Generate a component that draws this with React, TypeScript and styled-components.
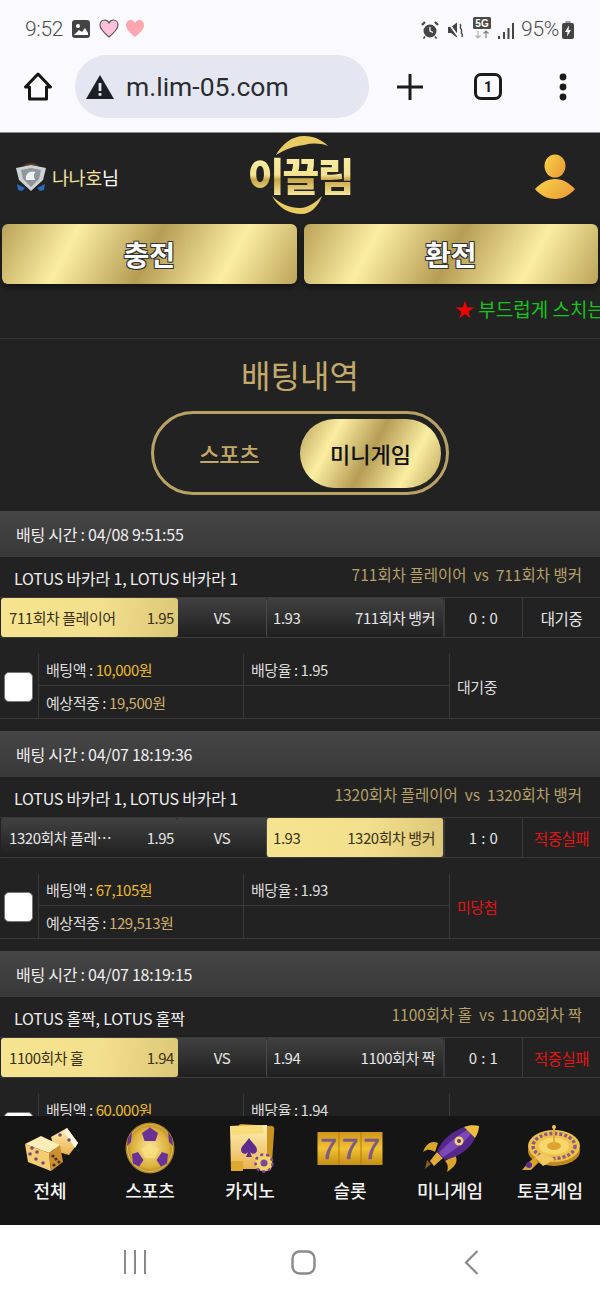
import React from 'react';
import styled, { createGlobalStyle } from 'styled-components';

const GOLD_BAND = 'linear-gradient(118deg, #b9a358 0%, #fbeea2 24%, #b59d54 50%, #fbeea2 76%, #bba45a 100%)';
const KR = '"Noto Sans CJK KR", "Noto Sans", sans-serif';

const GlobalStyle = createGlobalStyle`
  html, body {
    margin: 0;
    padding: 0;
    background: #222;
  }
  * {
    box-sizing: border-box;
  }
`;

const Phone = styled.div`
  display: flex;
  flex-direction: column;
  width: 600px;
  height: 1300px;
  overflow: hidden;
  font-family: ${KR};
`;

// device + browser
const Chrome = styled.div`
  flex: 0 0 133px;
  display: flex;
  flex-direction: column;
  background: #f9f9fe;
  border-bottom: 1px solid #8c8c8c;
`;

const StatusBar = styled.div`
  height: 55px;
  padding: 18px 26px 0 25px;
  display: flex;
  justify-content: space-between;
  align-items: flex-start;
  color: #4c4c4c;
  font-family: Roboto, sans-serif;
  font-weight: 300;
`;

const StatusGroup = styled.div`
  display: flex;
  align-items: center;
  height: 21px;
  gap: 7px;
`;

const StatusText = styled.span`
  font-size: 21px;
  letter-spacing: -0.3px;
`;

const BrowserBar = styled.div`
  height: 63px;
  padding: 0 24px;
  display: flex;
  align-items: center;
`;

const UrlPill = styled.div`
  width: 294px;
  height: 63px;
  margin-left: 23px;
  padding-left: 11px;
  display: flex;
  align-items: center;
  gap: 12px;
  border-radius: 32px;
  background: #e4e7f1;
`;

const UrlText = styled.span`
  font-family: Roboto, sans-serif;
  font-size: 26.5px;
  color: #2a2c30;
`;

const BrowserActions = styled.div`
  display: flex;
  align-items: center;
  margin-left: 28px;
`;

const TabCount = styled.div`
  width: 28px;
  height: 27px;
  margin: 0 57px 0 51px;
  display: flex;
  align-items: center;
  justify-content: center;
  border: 3px solid #1b1b1b;
  border-radius: 7px;
  font-family: Roboto, sans-serif;
  font-size: 15px;
  font-weight: 700;
  color: #1b1b1b;
`;

// scrolling page
const Page = styled.div`
  flex: 1;
  min-height: 0;
  overflow: hidden;
  background: #222222;
`;

const SiteHeader = styled.div`
  height: 91px;
  padding: 0 24px 0 15px;
  display: grid;
  grid-template-columns: 233px 104px 1fr;
  align-items: center;
`;

const User = styled.div`
  display: flex;
  align-items: center;
  gap: 5px;
  margin-top: -3px;
  font-size: 18.5px;
  letter-spacing: -0.4px;
  color: #fff;

  em {
    font-style: normal;
    color: #efe2a0;
  }
`;

const Logo = styled.div`
  position: relative;
  height: 80px;
  display: flex;
  align-items: center;
  justify-content: center;
`;

const LogoArcs = styled.svg`
  position: absolute;
  left: 0;
  top: 0;
  overflow: visible;
`;

const LogoText = styled.span`
  position: relative;
  margin-top: -8px;
  font-size: 40px;
  font-weight: 900;
  line-height: 1;
  letter-spacing: -2px;
  white-space: nowrap;
  color: transparent;
  background: linear-gradient(180deg, #f8eca4 0%, #f4e391 50%, #c9a544 62%, #f5e699 100%);
  -webkit-background-clip: text;
  background-clip: text;
`;

const Profile = styled.div`
  display: flex;
  justify-content: flex-end;
  margin-top: -3px;
`;

const CashRow = styled.div`
  display: flex;
  gap: 7px;
  padding: 0 2px;
`;

const CashButton = styled.div`
  flex: 1;
  height: 60px;
  display: flex;
  align-items: center;
  justify-content: center;
  border-radius: 6px;
  background: ${GOLD_BAND};
  box-shadow: 0 4px 6px rgba(0, 0, 0, 0.4);
  font-size: 28px;
  font-weight: 700;
  color: #fff;
  text-shadow: -1px -1px 0 #333, 1px -1px 0 #333, -1px 1px 0 #333, 1px 1px 0 #333;
`;

const Marquee = styled.div`
  height: 55px;
  padding: 8px 0 0 455px;
  overflow: hidden;
  white-space: nowrap;
  border-bottom: 1px solid #333;
  font-size: 19px;
  line-height: 34px;
  color: #16c41c;

  b {
    font-weight: 400;
    color: #f00000;
  }
`;

const Title = styled.h1`
  margin: 12px 0 14px;
  text-align: center;
  font-size: 32px;
  font-weight: 400;
  line-height: 46px;
  color: #c3aa6c;
`;

const Toggle = styled.div`
  width: 298px;
  height: 84px;
  margin: 0 auto 16px;
  padding: 4px 5px 4px 0;
  display: flex;
  align-items: center;
  border: 3px solid #b8a265;
  border-radius: 42px;
`;

const ToggleItem = styled.div`
  flex: 0 0 ${(props) => (props.$active ? 141 : 146)}px;
  height: 69px;
  padding-left: ${(props) => (props.$active ? 0 : 5)}px;
  display: flex;
  align-items: center;
  justify-content: center;
  border-radius: 35px;
  font-size: 22px;
  font-weight: 500;
  color: ${(props) => (props.$active ? '#111' : '#c2a868')};
  background: ${(props) => (props.$active ? GOLD_BAND : 'transparent')};
`;

// betting card
const Card = styled.div`
  margin-bottom: 12px;
`;

const CardTime = styled.div`
  height: 46px;
  padding-left: 16px;
  display: flex;
  align-items: center;
  background: linear-gradient(180deg, #454545, #393939);
  font-size: 16px;
  letter-spacing: -0.25px;
  color: #eee;
`;

const InfoRow = styled.div`
  height: 40px;
  padding: 0 18px 0 14px;
  display: flex;
  justify-content: space-between;
`;

const League = styled.span`
  padding-top: 9px;
  font-size: 16px;
  letter-spacing: -0.2px;
  color: #eee;
`;

const Versus = styled.span`
  padding-top: 6px;
  font-size: 15.5px;
  white-space: pre;
  color: #b5a06a;
`;

const MatchRow = styled.div`
  height: 41px;
  padding-left: 1px;
  display: grid;
  grid-template-columns: 177px 88px 178px 78px 78px;
  border-top: 1px solid #3a3a3a;
  border-bottom: 1px solid #3a3a3a;
`;

const Pick = styled.div`
  min-width: 0;
  padding: 0 ${(props) => (props.$reverse ? 8 : 4)}px 0 ${(props) => (props.$reverse ? 6 : 8)}px;
  display: flex;
  flex-direction: ${(props) => (props.$reverse ? 'row-reverse' : 'row')};
  align-items: center;
  justify-content: space-between;
  gap: 8px;
  border-radius: 3px;
  font-size: 15px;
  letter-spacing: -0.45px;
  color: ${(props) => (props.$active ? '#3a3116' : '#e6e6e6')};
  background: ${(props) =>
    props.$active
      ? 'linear-gradient(100deg, #f6e491 0%, #f3e08e 55%, #dcc677 100%)'
      : 'linear-gradient(180deg, #414141 0%, #1f1f1f 100%)'};
  border-left: ${(props) => (props.$reverse ? '1px solid #4a4a4a' : 'none')};
  border-right: ${(props) => (props.$reverse ? '1px solid #3a3a3a' : 'none')};
`;

const PickName = styled.span`
  min-width: 0;
  max-width: 110px;
  overflow: hidden;
  white-space: nowrap;
  text-overflow: ellipsis;
`;

const VsCell = styled(Pick)`
  padding: 0;
  justify-content: center;
  border-radius: 0;
`;

const ScoreCell = styled.div`
  display: flex;
  align-items: center;
  justify-content: center;
  border-left: 1px solid #3a3a3a;
  font-size: ${(props) => (props.$wide ? 15 : 15.5)}px;
  letter-spacing: ${(props) => (props.$wide ? 0.4 : -0.5)}px;
  color: ${(props) => (props.$failed ? '#e01414' : '#e6e6e6')};
`;

const Detail = styled.div`
  height: 65px;
  margin-top: 16px;
  display: grid;
  grid-template-columns: 38px 205px 206px 1fr;
  grid-template-rows: 1fr 1fr;
  border-bottom: 1px solid #3a3a3a;
`;

const CheckCell = styled.div`
  grid-row: 1 / span 2;
  padding: 18px 0 0 4px;
`;

const CheckBox = styled.input.attrs({ type: 'checkbox' })`
  appearance: none;
  display: block;
  width: 29px;
  height: 30px;
  margin: 0;
  border: 1px solid #777;
  border-radius: 5px;
  background: #fff;
`;

const DetailCell = styled.div`
  padding-left: 7px;
  display: flex;
  align-items: center;
  border-left: 1px solid #3a3a3a;
  border-bottom: ${(props) => (props.$top ? '1px solid #3a3a3a' : 'none')};
  font-size: 15px;
  letter-spacing: -0.45px;
  color: #ddd;
`;

const Amount = styled.span`
  margin-left: 3px;
  color: ${(props) => (props.$strong ? '#eab92e' : '#cfae6c')};
`;

const ResultCell = styled(DetailCell)`
  grid-column: 4;
  grid-row: 1 / span 2;
  border-bottom: none;
  color: ${(props) => (props.$failed ? '#e01414' : '#ddd')};
`;

// fixed menus
const BottomNav = styled.div`
  flex: 0 0 109px;
  padding-top: 5px;
  display: grid;
  grid-template-columns: repeat(6, 100px);
  background: #151515;
`;

const NavItem = styled.div`
  display: flex;
  flex-direction: column;
  align-items: center;
`;

const NavLabel = styled.span`
  margin-top: 2px;
  font-size: 18px;
  font-weight: 500;
  line-height: 26px;
  white-space: nowrap;
  color: #f4f4f4;
`;

const AndroidNav = styled.div`
  flex: 0 0 75px;
  padding-top: 25px;
  display: flex;
  align-items: flex-start;
  background: #fff;
`;

const AndroidSlot = styled.div`
  flex: 0 0 ${(props) => props.$width}px;
  display: flex;
  justify-content: flex-end;
`;

const GoldDefs = () => (
  <svg width="0" height="0" style={{ position: 'absolute' }}>
    <defs>
      <linearGradient id="gold" x1="0" y1="0" x2="1" y2="1">
        <stop offset="0" stopColor="#fbe88e" />
        <stop offset="0.5" stopColor="#e3b43a" />
        <stop offset="1" stopColor="#a8741a" />
      </linearGradient>
      <linearGradient id="goldLight" x1="0" y1="0" x2="0" y2="1">
        <stop offset="0" stopColor="#fff0b4" />
        <stop offset="1" stopColor="#e9b04c" />
      </linearGradient>
      <radialGradient id="ball" cx="0.5" cy="0.5" r="0.55">
        <stop offset="0" stopColor="#f9e59a" />
        <stop offset="0.7" stopColor="#dcae38" />
        <stop offset="1" stopColor="#8c6414" />
      </radialGradient>
      <linearGradient id="profile" x1="0" y1="0" x2="1" y2="0.6">
        <stop offset="0" stopColor="#f9d548" />
        <stop offset="1" stopColor="#ec9f38" />
      </linearGradient>
      <linearGradient id="slot" x1="0" y1="0" x2="0" y2="1">
        <stop offset="0" stopColor="#cf9518" />
        <stop offset="0.5" stopColor="#f2c234" />
        <stop offset="1" stopColor="#c68c14" />
      </linearGradient>
    </defs>
  </svg>
);

const DiceIcon = () => (
  <svg width="66" height="54" viewBox="0 0 66 54">
    <path d="M34 16 L50 7 L61 22 L52 34 L38 30 Z" fill="url(#goldLight)" />
    <path d="M50 7 L61 22 L58 27 L47 11 Z" fill="#fff6e0" />
    <path d="M24 15 L43 24 L32 32 L8 23 Z" fill="#ffedb8" />
    <path d="M8 23 L32 32 L34 50 L11 41 Z" fill="#f5cd72" />
    <path d="M32 32 L43 24 L46 41 L34 50 Z" fill="#cb9030" />
    <g fill="#7b4a7a">
      <circle cx="43" cy="14" r="1.8" />
      <circle cx="52" cy="19" r="1.8" />
      <circle cx="15" cy="27" r="1.8" />
      <circle cx="13" cy="33" r="1.8" />
      <circle cx="20" cy="31" r="1.8" />
      <circle cx="19" cy="38" r="1.8" />
      <circle cx="26" cy="42" r="1.8" />
    </g>
    <g fill="#4d2a1c">
      <circle cx="36" cy="35" r="1.6" />
      <circle cx="39" cy="38" r="1.6" />
      <circle cx="37" cy="44" r="1.6" />
      <circle cx="42" cy="41" r="1.6" />
    </g>
  </svg>
);

const BallIcon = () => (
  <svg width="66" height="54" viewBox="0 0 66 54">
    <ellipse cx="33" cy="27" rx="24.5" ry="25.5" fill="url(#ball)" />
    <ellipse cx="33" cy="27" rx="22.5" ry="23.5" fill="none" stroke="#f5dc80" strokeWidth="1" opacity="0.6" />
    <path d="M33 6.5 L41 12 L38.5 20 L27.5 20 L25 12 Z" fill="#6a3296" />
    <path d="M15 33 L21 31 L26.5 39 L22 45.5 L16 42.5 Z" fill="#6a3296" />
    <path d="M51 33 L45 31 L39.5 39 L44 45.5 L50 42.5 Z" fill="#6a3296" />
    <path d="M11 17 L15 11 L14 21 L10 25 Z" fill="#6a3296" />
    <path d="M55 17 L51 11 L52 21 L56 25 Z" fill="#6a3296" />
    <path d="M33 22 L42 28 L38 37 L28 37 L24 28 Z" fill="#f7e080" opacity="0.75" />
  </svg>
);

const CardsIcon = () => (
  <svg width="66" height="54" viewBox="0 0 66 54">
    <rect x="20" y="4" width="36" height="44" rx="3" fill="#c9931f" transform="rotate(4 38 26)" />
    <path d="M13 5 L50 4 L50 44 L38 48 L19 48 L14 50 Z" fill="url(#goldLight)" />
    <path d="M13 5 L46 4 L47 12 L15 14 Z" fill="#f7d566" opacity="0.7" />
    <path d="M32 17 C35 22 40 25 40 29 C40 33 35 34 33 31 L35 36 L29 36 L31 31 C29 34 24 33 24 29 C24 25 29 22 32 17 Z" fill="#5d2c8c" />
    <rect x="14" y="40" width="12" height="10" rx="1" fill="#e0a92e" />
    <circle cx="47" cy="42" r="8.5" fill="#f3d36a" />
    <circle cx="47" cy="42" r="8.5" fill="none" stroke="#7a4a9c" strokeWidth="2.5" strokeDasharray="3 3" />
    <circle cx="47" cy="42" r="3.5" fill="#7a4a9c" />
  </svg>
);

const SlotIcon = () => (
  <svg width="66" height="54" viewBox="0 0 66 54">
    <rect x="0.5" y="11" width="65" height="33" fill="url(#slot)" />
    <path d="M22 11 V44 M44 11 V44" stroke="#b07c14" strokeWidth="1" />
    <g fontFamily="Liberation Sans, sans-serif" fontSize="30" fontWeight="400" fill="#7b5a86" stroke="#7b5a86" strokeWidth="0.6" textAnchor="middle">
      <text x="11.5" y="38">7</text>
      <text x="33" y="38">7</text>
      <text x="54.5" y="38">7</text>
    </g>
  </svg>
);

const RocketIcon = () => (
  <svg width="66" height="54" viewBox="0 0 66 54">
    <path d="M21 22 C14 19 9 23 6 31 C11 27 15 29 18 31 Z" fill="#d9a52e" />
    <path d="M38 34 C42 40 38 46 30 51 C32 45 30 42 28 40 Z" fill="#d9a52e" />
    <path d="M13 40 L20 31 L26 37 L17 45 Z" fill="#e0ad3c" />
    <path d="M14 43 L8 48 L10 39 Z" fill="#8a5a18" />
    <path d="M20 31 C24 19 36 10 47 6 L58 17 C54 27 42 36 28 39 Z" fill="#55288c" />
    <path d="M22 32 C28 25 38 16 50 9 L54 13 C46 23 36 30 26 36 Z" fill="#7d48b8" />
    <path d="M47 6 C52 4 58 4 62 5 C62 9 60 14 58 17 Z" fill="#eebc3f" />
    <circle cx="42" cy="20" r="4.5" fill="#f3d36a" />
    <circle cx="42" cy="20" r="2" fill="#5e2e96" />
  </svg>
);

const RouletteIcon = () => (
  <svg width="66" height="54" viewBox="0 0 66 54">
    <ellipse cx="37" cy="30" rx="26" ry="15" fill="#c08820" />
    <ellipse cx="37" cy="25" rx="26" ry="16" fill="#efc248" />
    <ellipse cx="37" cy="25" rx="21" ry="12.5" fill="none" stroke="#8a5a8c" strokeWidth="3.5" strokeDasharray="3 2" />
    <ellipse cx="37" cy="25" rx="15" ry="8.5" fill="#f5d76e" />
    <ellipse cx="37" cy="25" rx="7" ry="4" fill="#dca42c" />
    <path d="M36 7 L38 7 L38 24 L36 24 Z" fill="#e0ad3c" />
    <circle cx="37" cy="6" r="2" fill="#f0c850" />
    <path d="M18 36 L26 32 L38 38 L26 45 Z" fill="#f0ca60" />
    <path d="M12 41 L18 36 L21 42 L14 49 L5 49 Z" fill="#d9a52e" />
    <circle cx="12" cy="44" r="3" fill="#5e2e96" />
  </svg>
);

const menu = [
  { label: '전체', Icon: DiceIcon },
  { label: '스포츠', Icon: BallIcon },
  { label: '카지노', Icon: CardsIcon },
  { label: '슬롯', Icon: SlotIcon },
  { label: '미니게임', Icon: RocketIcon },
  { label: '토큰게임', Icon: RouletteIcon },
];

const bets = [
  {
    time: '04/08 9:51:55',
    league: 'LOTUS 바카라 1, LOTUS 바카라 1',
    home: '711회차 플레이어',
    away: '711회차 뱅커',
    homeOdds: '1.95',
    awayOdds: '1.93',
    picked: 'home',
    score: '0 : 0',
    status: '대기중',
    amount: '10,000원',
    rate: '1.95',
    win: '19,500원',
    result: '대기중',
    failed: false,
  },
  {
    time: '04/07 18:19:36',
    league: 'LOTUS 바카라 1, LOTUS 바카라 1',
    home: '1320회차 플레이어',
    away: '1320회차 뱅커',
    homeOdds: '1.95',
    awayOdds: '1.93',
    picked: 'away',
    score: '1 : 0',
    status: '적중실패',
    amount: '67,105원',
    rate: '1.93',
    win: '129,513원',
    result: '미당첨',
    failed: true,
  },
  {
    time: '04/07 18:19:15',
    league: 'LOTUS 홀짝, LOTUS 홀짝',
    home: '1100회차 홀',
    away: '1100회차 짝',
    homeOdds: '1.94',
    awayOdds: '1.94',
    picked: 'home',
    score: '0 : 1',
    status: '적중실패',
    amount: '60,000원',
    rate: '1.94',
    win: '116,400원',
    result: '미당첨',
    failed: true,
  },
];

function App() {
  return (
    <Phone>
      <GlobalStyle />
      <GoldDefs />
      <Chrome>
        <StatusBar>
          <StatusGroup>
            <StatusText>9:52</StatusText>
            <svg width="18" height="18" viewBox="0 0 18 18" style={{ marginLeft: 2 }}>
              <rect width="18" height="18" rx="3" fill="#444" />
              <circle cx="6" cy="6" r="2" fill="#fff" />
              <path d="M2 15 L7 10 L10 12 L13 8 L16 13 V15 Z" fill="#fff" />
            </svg>
            <svg width="20" height="19" viewBox="0 0 20 19" style={{ marginLeft: 2 }}>
              <path d="M10 18 C4 13 1 10 1 6 C1 3 3 1 5.5 1 C7.5 1 9 2 10 4 C11 2 12.5 1 14.5 1 C17 1 19 3 19 6 C19 10 16 13 10 18 Z" fill="#ffc0dc" stroke="#555" strokeWidth="1.1" />
            </svg>
            <svg width="20" height="19" viewBox="0 0 20 19" style={{ marginLeft: -1 }}>
              <path d="M10 18 C4 13 1 10 1 6 C1 3 3 1 5.5 1 C7.5 1 9 2 10 4 C11 2 12.5 1 14.5 1 C17 1 19 3 19 6 C19 10 16 13 10 18 Z" fill="#ffa6ae" />
            </svg>
          </StatusGroup>
          <StatusGroup>
            <svg width="18" height="18" viewBox="0 0 18 18" style={{ marginTop: 3 }}>
              <circle cx="9" cy="10" r="6.5" fill="#444" />
              <path d="M9 6 V10 L12 11.5" stroke="#fff" strokeWidth="1.3" fill="none" />
              <path d="M1 4 L4 1 M17 4 L14 1" stroke="#444" strokeWidth="2.2" />
              <path d="M4 15.5 L2.5 17.5 M14 15.5 L15.5 17.5" stroke="#444" strokeWidth="1.6" />
            </svg>
            <svg width="18" height="18" viewBox="0 0 18 18" style={{ marginLeft: 1, marginTop: 3 }}>
              <path d="M1 6 H4 L10 1.5 V16.5 L4 12 H1 Z" fill="#444" />
              <path d="M1 1.5 L12 16.5" stroke="#f9f9fe" strokeWidth="1.8" />
              <path d="M13 3 C15 5 12 6 14 8 C16 10 13 11 15 13 C16 14 15 15 15 16" stroke="#444" strokeWidth="1.4" fill="none" />
            </svg>
            <svg width="18" height="22" viewBox="0 0 18 22" style={{ marginLeft: 1, marginTop: -2 }}>
              <rect width="18" height="12" rx="1.5" fill="#4a4a4a" />
              <text x="9" y="10" textAnchor="middle" fontFamily="Liberation Sans, sans-serif" fontSize="10" fontWeight="700" fill="#fff">5G</text>
              <path d="M5 14 V21 M2.5 18.5 L5 21 L7.5 18.5" stroke="#b0b0b0" strokeWidth="1.2" fill="none" />
              <path d="M13 21 V14 M10.5 16.5 L13 14 L15.5 16.5" stroke="#808080" strokeWidth="1.2" fill="none" />
            </svg>
            <svg width="16" height="17" viewBox="0 0 16 17" style={{ marginTop: 3 }}>
              <rect x="0" y="14" width="2" height="3" fill="#444" />
              <rect x="5" y="10" width="2" height="7" fill="#444" />
              <rect x="9.5" y="6" width="2" height="11" fill="#444" />
              <rect x="14" y="1" width="2" height="16" fill="#444" />
            </svg>
            <StatusText>95%</StatusText>
            <svg width="12" height="18" viewBox="0 0 12 18" style={{ marginLeft: -4, marginTop: 2 }}>
              <rect x="3.5" width="5" height="3" fill="#999" />
              <rect y="2" width="12" height="16" rx="2" fill="#444" />
              <path d="M7 4.5 L3 11 H5.5 L5 15.5 L9 9 H6.5 Z" fill="#fff" />
            </svg>
          </StatusGroup>
        </StatusBar>
        <BrowserBar>
          <svg width="28" height="29" viewBox="0 0 28 29">
            <path d="M14 2 L26.5 15 H22.5 V27 H5.5 V15 H1.5 Z" fill="none" stroke="#151515" strokeWidth="3" strokeLinejoin="round" />
          </svg>
          <UrlPill>
            <svg width="28" height="24" viewBox="0 0 28 24">
              <path d="M14 0 L28 24 H0 Z" fill="#1c2024" />
              <rect x="12.6" y="8" width="2.8" height="8" fill="#e4e7f1" />
              <rect x="12.6" y="18" width="2.8" height="2.8" fill="#e4e7f1" />
            </svg>
            <UrlText>m.lim-05.com</UrlText>
          </UrlPill>
          <BrowserActions>
            <svg width="26" height="26" viewBox="0 0 26 26">
              <path d="M13 0 V26 M0 13 H26" stroke="#1b1b1b" strokeWidth="3" />
            </svg>
            <TabCount>1</TabCount>
            <svg width="8" height="28" viewBox="0 0 8 28">
              <circle cx="4" cy="4" r="3.4" fill="#1b1b1b" />
              <circle cx="4" cy="14" r="3.4" fill="#1b1b1b" />
              <circle cx="4" cy="24" r="3.4" fill="#1b1b1b" />
            </svg>
          </BrowserActions>
        </BrowserBar>
      </Chrome>

      <Page>
        <SiteHeader>
          <User>
            <svg width="32" height="30" viewBox="0 0 32 30">
              <path d="M8 4 C12 0 20 0 24 4 L20 7 H12 Z" fill="#5a3e22" />
              <path d="M2 22 L10 26 L7 29 L3 28 Z M30 22 L22 26 L25 29 L29 28 Z" fill="#2a6ab8" />
              <path d="M1 6 L16 3 L31 6 L28 18 L16 29 L4 18 Z" fill="#cdd2d6" />
              <path d="M6 8 L16 6 L26 8 L24 17 L16 25 L8 17 Z" fill="#8f979c" />
              <path d="M11 18 C10 11 15 8 21 10 C18 11 19 15 20 18 Z" fill="#eef0f2" />
            </svg>
            <span>
              <em>나나호</em>님
            </span>
          </User>
          <Logo>
            <LogoArcs width="104" height="80" viewBox="0 0 104 80">
              <path d="M28 16 C34 5 44 -3 56 -3 C66 -3 74 1 80 7 C72 4 64 4 56 6 C46 7 38 10 28 16 Z" fill="#e8cb62" />
              <path d="M24 57 C30 68 40 75 54 75 C62 75 70 68 74 57 C68 63 60 69 52 69 C42 69 32 65 24 57 Z" fill="#e8cb62" />
            </LogoArcs>
            <LogoText>이끌림</LogoText>
          </Logo>
          <Profile>
            <svg width="42" height="46" viewBox="0 0 42 46">
              <ellipse cx="21" cy="12" rx="10.5" ry="11.5" fill="url(#profile)" />
              <path d="M21 25 C29 25 35 29 41 35 C36 41 29 45 21 45 C13 45 6 41 1 35 C7 29 13 25 21 25 Z" fill="url(#profile)" />
            </svg>
          </Profile>
        </SiteHeader>

        <CashRow>
          <CashButton>충전</CashButton>
          <CashButton>환전</CashButton>
        </CashRow>

        <Marquee>
          <b>★</b> 부드럽게 스치는
        </Marquee>

        <Title>배팅내역</Title>
        <Toggle>
          <ToggleItem>스포츠</ToggleItem>
          <ToggleItem $active>미니게임</ToggleItem>
        </Toggle>

        {bets.map((bet) => (
          <Card key={bet.time}>
            <CardTime>배팅 시간 : {bet.time}</CardTime>
            <InfoRow>
              <League>{bet.league}</League>
              <Versus>{`${bet.home}  vs  ${bet.away}`}</Versus>
            </InfoRow>
            <MatchRow>
              <Pick $active={bet.picked === 'home'}>
                <PickName>{bet.home}</PickName>
                <span>{bet.homeOdds}</span>
              </Pick>
              <VsCell>VS</VsCell>
              <Pick $reverse $active={bet.picked === 'away'}>
                <PickName>{bet.away}</PickName>
                <span>{bet.awayOdds}</span>
              </Pick>
              <ScoreCell $wide>{bet.score}</ScoreCell>
              <ScoreCell $failed={bet.failed}>{bet.status}</ScoreCell>
            </MatchRow>
            <Detail>
              <CheckCell>
                <CheckBox readOnly />
              </CheckCell>
              <DetailCell $top>
                배팅액 : <Amount $strong>{bet.amount}</Amount>
              </DetailCell>
              <DetailCell $top>배당율 : {bet.rate}</DetailCell>
              <ResultCell $failed={bet.failed}>{bet.result}</ResultCell>
              <DetailCell>
                예상적중 : <Amount>{bet.win}</Amount>
              </DetailCell>
              <DetailCell />
            </Detail>
          </Card>
        ))}
      </Page>

      <BottomNav>
        {menu.map(({ label, Icon }) => (
          <NavItem key={label}>
            <Icon />
            <NavLabel>{label}</NavLabel>
          </NavItem>
        ))}
      </BottomNav>

      <AndroidNav>
        <AndroidSlot $width={146}>
          <svg width="22" height="24" viewBox="0 0 22 24">
            <path d="M1 0 V24 M11 0 V24 M21 0 V24" stroke="#8a8a8a" strokeWidth="2" />
          </svg>
        </AndroidSlot>
        <AndroidSlot $width={170}>
          <svg width="25" height="25" viewBox="0 0 25 25">
            <rect x="1.5" y="1.5" width="22" height="22" rx="7" fill="none" stroke="#8a8a8a" strokeWidth="2.4" />
          </svg>
        </AndroidSlot>
        <AndroidSlot $width={163}>
          <svg width="15" height="25" viewBox="0 0 15 25">
            <path d="M13.5 1 L2 12.5 L13.5 24" fill="none" stroke="#8a8a8a" strokeWidth="2.2" />
          </svg>
        </AndroidSlot>
      </AndroidNav>
    </Phone>
  );
}

export default App;
